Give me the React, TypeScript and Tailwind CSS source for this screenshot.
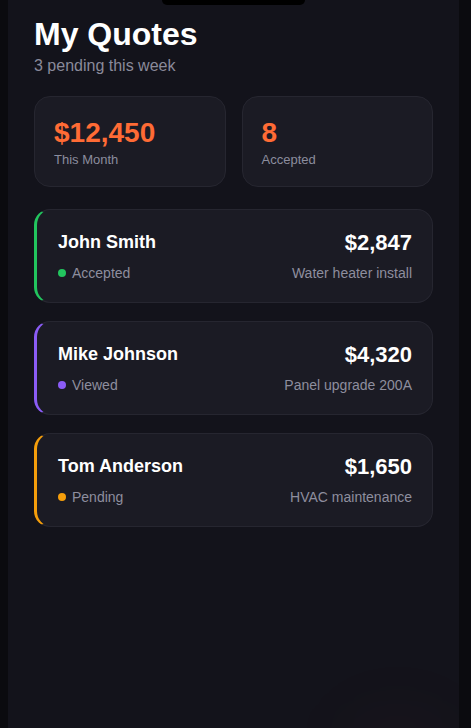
const QUOTES = [
  { name: 'John Smith', amount: '$2,847', status: 'Accepted', job: 'Water heater install', bar: 'border-l-[#22c55e]', dot: 'bg-[#22c55e]' },
  { name: 'Mike Johnson', amount: '$4,320', status: 'Viewed', job: 'Panel upgrade 200A', bar: 'border-l-[#8b5cf6]', dot: 'bg-[#8b5cf6]' },
  { name: 'Tom Anderson', amount: '$1,650', status: 'Pending', job: 'HVAC maintenance', bar: 'border-l-[#f59e0b]', dot: 'bg-[#f59e0b]' },
];

export default function App() {
  return (
    <div
      className="min-h-screen bg-[#0b0b0f]"
      style={{ fontFamily: '"Liberation Sans", Arial, sans-serif' }}
    >
      <div className="relative ml-2 w-[451px] h-[728px] overflow-hidden bg-[#13131b] px-[26px]">
        {/* Notch */}
        <div className="absolute top-0 left-[154px] h-[5px] w-[143px] rounded-b-[6px] bg-black" />

        {/* Header */}
        <h1 className="pt-4 text-[32px] leading-[37px] font-bold text-white">My Quotes</h1>
        <p className="mt-1 text-base leading-[18px] text-[#8a8a9a]">3 pending this week</p>

        {/* Stats */}
        <div className="mt-[21px] grid grid-cols-2 gap-4">
          <StatCard value="$12,450" label="This Month" />
          <StatCard value="8" label="Accepted" />
        </div>

        {/* Quote list */}
        <div className="mt-[22px] flex flex-col gap-[18px]">
          {QUOTES.map((q) => (
            <QuoteCard key={q.name} quote={q} />
          ))}
        </div>

        {/* FAB glow peeking in from below */}
        <div className="absolute left-[345px] top-[722px] h-[90px] w-[90px] rounded-full bg-[#ff6b35]/5 blur-2xl" />
      </div>
    </div>
  );
}

function StatCard({ value, label }: { value: string; label: string }) {
  return (
    <div className="h-[91px] rounded-2xl border border-[#262630] bg-[#1b1b24] px-[19px] pt-[18px]">
      <div className="text-[28px] leading-tight font-bold text-[#ff6b35]">{value}</div>
      <div className="text-[13px] leading-[19px] text-[#8b8d9e]">{label}</div>
    </div>
  );
}

function QuoteCard({ quote }: { quote: (typeof QUOTES)[number] }) {
  return (
    <div
      className={`rounded-2xl border border-[#262630] border-l-[3px] ${quote.bar} bg-[#1b1b24] pl-[21px] pr-5 pt-5 pb-[21px]`}
    >
      <div className="flex items-center justify-between">
        <span className="text-lg leading-[25px] font-bold text-white">{quote.name}</span>
        <span className="text-[22px] leading-[25px] font-bold text-white">{quote.amount}</span>
      </div>
      <div className="mt-2.5 flex items-center justify-between text-sm leading-4 text-[#8e8e9e]">
        <span className="flex items-center gap-1.5">
          <span className={`h-2 w-2 rounded-full ${quote.dot}`} />
          {quote.status}
        </span>
        <span>{quote.job}</span>
      </div>
    </div>
  );
}
